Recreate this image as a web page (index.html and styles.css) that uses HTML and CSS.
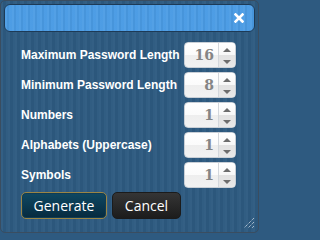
FILE: index.html
```html
<!DOCTYPE html>
<html>
<head>
<meta charset="utf-8">
<link rel="stylesheet" href="styles.css">
</head>
<body>
<div class="dialog">
  <div class="titlebar">
    <svg class="close" width="10" height="10" viewBox="0 0 10 10"><path d="M1.5 1.5 L8.5 8.5 M8.5 1.5 L1.5 8.5" stroke="#fff" stroke-width="2.6" stroke-linecap="square"/></svg>
  </div>
  <div class="content">
    <div class="row">
      <span class="label">Maximum Password Length</span>
      <div class="spinner"><span class="value">16</span><span class="arrows"><span class="up"></span><span class="down"></span></span></div>
    </div>
    <div class="row">
      <span class="label">Minimum Password Length</span>
      <div class="spinner"><span class="value">8</span><span class="arrows"><span class="up"></span><span class="down"></span></span></div>
    </div>
    <div class="row">
      <span class="label">Numbers</span>
      <div class="spinner"><span class="value">1</span><span class="arrows"><span class="up"></span><span class="down"></span></span></div>
    </div>
    <div class="row">
      <span class="label">Alphabets (Uppercase)</span>
      <div class="spinner"><span class="value">1</span><span class="arrows"><span class="up"></span><span class="down"></span></span></div>
    </div>
    <div class="row">
      <span class="label">Symbols</span>
      <div class="spinner"><span class="value">1</span><span class="arrows"><span class="up"></span><span class="down"></span></span></div>
    </div>
    <div class="buttons">
      <button class="btn btn-primary">Generate</button>
      <button class="btn btn-dark">Cancel</button>
    </div>
  </div>
  <svg class="grip" width="12" height="12" viewBox="0 0 12 12">
    <path d="M11 1 L1 11 M11 5 L5 11 M11 9 L9 11" stroke="#d8e2ec" stroke-width="1" stroke-dasharray="1 1" fill="none"/>
  </svg>
</div>
</body>
</html>
```

FILE: styles.css
```css
html, body {
  margin: 0;
  padding: 0;
  background: #2e5a80;
}
.dialog {
  position: relative;
  width: 259px;
  height: 233px;
  box-sizing: border-box;
  border: 1px solid #3a4d60;
  border-radius: 5px;
  padding: 3px;
  background-color: #2d5a80;
  background-image: repeating-linear-gradient(90deg, rgba(255,255,255,0.03) 0 2px, rgba(0,0,0,0.03) 2px 5px, rgba(255,255,255,0.02) 5px 7px);
  font-family: "Liberation Sans", Arial, sans-serif;
}
.titlebar {
  height: 28px;
  box-sizing: border-box;
  border: 1px solid #1d3a56;
  border-radius: 6px;
  background-color: #4a9be4;
  background-image: repeating-linear-gradient(90deg, rgba(255,255,255,0.05) 0 2px, rgba(0,0,0,0.04) 2px 4px, rgba(255,255,255,0.02) 4px 7px);
  display: flex;
  align-items: center;
  justify-content: flex-end;
  padding-right: 10px;
}
.close {
  display: block;
}
.content {
  padding: 10px 19px 0 16px;
  display: flex;
  flex-direction: column;
  gap: 4px;
}
.row {
  display: flex;
  align-items: center;
  justify-content: space-between;
  height: 26px;
}
.label {
  color: #fff;
  font-size: 12px;
  font-weight: bold;
  white-space: nowrap;
  padding-left: 1px;
}
.spinner {
  flex: none;
  width: 52px;
  height: 26px;
  box-sizing: border-box;
  border: 1px solid #c9cfd6;
  border-radius: 4px;
  display: flex;
  background: linear-gradient(#ffffff 0%, #fbfbfb 50%, #eeeeee 51%, #f2f2f2 100%);
  overflow: hidden;
}
.value {
  flex: 1;
  text-align: right;
  padding-right: 4px;
  color: #858585;
  font-family: "DejaVu Serif", Georgia, serif;
  font-weight: bold;
  font-size: 14px;
  line-height: 24px;
}
.arrows {
  width: 17px;
  border-left: 1px solid #d3d7dc;
  display: flex;
  flex-direction: column;
  align-items: center;
  justify-content: space-between;
  padding: 5px 0 3px;
  box-sizing: border-box;
  background: linear-gradient(#ffffff 0%, #f7f7f7 50%, #e2e2e2 51%, #e8e8e8 100%);
}
.up {
  width: 0; height: 0;
  border-left: 4px solid transparent;
  border-right: 4px solid transparent;
  border-bottom: 4px solid #6d6d6d;
}
.down {
  width: 0; height: 0;
  border-left: 4px solid transparent;
  border-right: 4px solid transparent;
  border-top: 4px solid #6d6d6d;
}
.buttons {
  display: flex;
  gap: 5px;
  margin-top: 0;
  margin-left: 1px;
}
.btn {
  height: 27px;
  border-radius: 5px;
  font-family: "Open Sans", sans-serif;
  font-size: 14px;
  color: #fff;
  padding: 0;
  cursor: pointer;
}
.btn-primary {
  width: 86px;
  border: 1px solid #9a8545;
  background: linear-gradient(#0f4863, #062a3e);
  box-shadow: inset 0 0 0 1px #0f3c55;
}
.btn-dark {
  width: 69px;
  border: 1px solid #1b1b1b;
  background: linear-gradient(#353535, #1c1c1c);
}
.grip {
  position: absolute;
  right: 3px;
  bottom: 3px;
}
```
